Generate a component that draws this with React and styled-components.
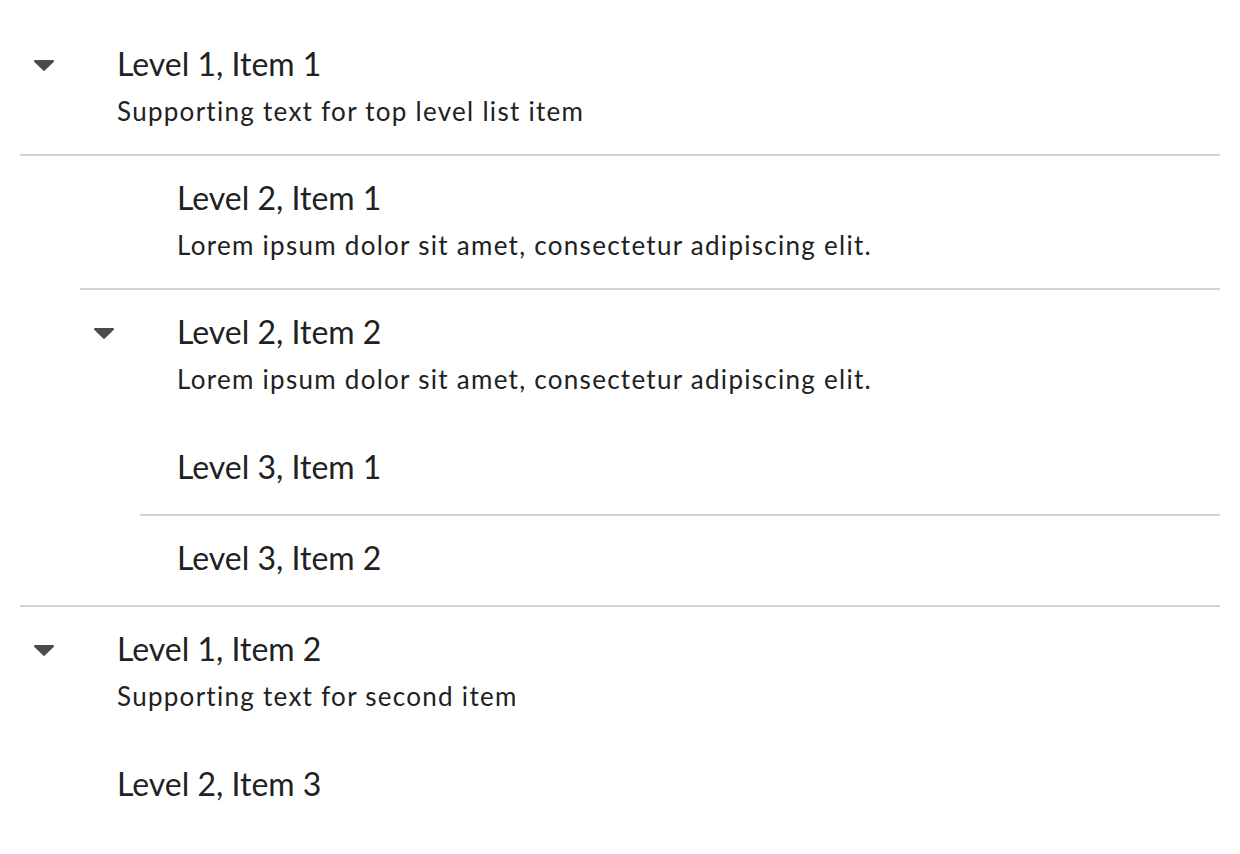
import React from "react";
import styled, { createGlobalStyle } from "styled-components";

const GlobalStyle = createGlobalStyle`
  html, body {
    margin: 0;
    padding: 0;
    background: #ffffff;
  }
  body {
    font-family: Lato, "Open Sans", sans-serif;
    color: #202122;
    font-variant-ligatures: none;
  }
`;

const tree = [
  {
    title: "Level 1, Item 1",
    text: "Supporting text for top level list item",
    rowRule: true,
    itemRule: true,
    children: {
      toggles: true,
      items: [
        {
          title: "Level 2, Item 1",
          text: "Lorem ipsum dolor sit amet, consectetur adipiscing elit.",
          rowRule: true,
        },
        {
          title: "Level 2, Item 2",
          text: "Lorem ipsum dolor sit amet, consectetur adipiscing elit.",
          children: {
            toggles: false,
            items: [
              { title: "Level 3, Item 1", rowRule: true },
              { title: "Level 3, Item 2" },
            ],
          },
        },
      ],
    },
  },
  {
    title: "Level 1, Item 2",
    text: "Supporting text for second item",
    children: {
      toggles: false,
      items: [{ title: "Level 2, Item 3" }],
    },
  },
];

const Caret = () => (
  <svg width="20" height="11" viewBox="0 0 20 11" aria-hidden="true">
    <path d="M1.2 0h17.6c1 0 1.5 1.2.8 1.9L10.8 10.6c-.45.45-1.15.45-1.6 0L.4 1.9C-.3 1.2.2 0 1.2 0z" fill="#494c4e" />
  </svg>
);

const ListItems = ({ list, nested, joined }) => (
  <List $nested={nested} $joined={joined}>
    {list.items.map((item) => (
      <Item key={item.title} $rule={item.itemRule}>
        <Row $rule={item.rowRule} $hasText={!!item.text}>
          <Control $wide={list.toggles}>{item.children && list.toggles && <Caret />}</Control>
          <Content>
            <Title>{item.title}</Title>
            {item.text && <Supporting>{item.text}</Supporting>}
          </Content>
        </Row>
        {item.children && <ListItems list={item.children} nested joined={!item.rowRule} />}
      </Item>
    ))}
  </List>
);

const App = () => (
  <>
    <GlobalStyle />
    <Page>
      <ListItems list={{ toggles: true, items: tree }} />
    </Page>
  </>
);

export default App;

const Page = styled.div`
  padding: 22px 20px 20px;
`;

const List = styled.ul`
  list-style: none;
  margin: ${(p) => (p.$joined ? "3px" : "0")} 0 0 ${(p) => (p.$nested ? "60px" : "0")};
  padding: 0;
`;

const Item = styled.li`
  border-bottom: ${(p) => (p.$rule ? "2px solid #cdd5dc" : "none")};
`;

const Row = styled.div`
  display: flex;
  align-items: flex-start;
  padding: 20px 0 ${(p) => (p.$hasText ? "24px" : "25px")};
  border-bottom: ${(p) => (p.$rule ? "2px solid #cdd5dc" : "none")};
`;

const Control = styled.div`
  flex: 0 0 ${(p) => (p.$wide ? "97px" : "37px")};
  height: 44px;
  display: flex;
  align-items: center;
  padding-left: 14px;
  box-sizing: border-box;
  padding-top: 2px;
`;

const Content = styled.div`
  display: flex;
  flex-direction: column;
  min-width: 0;
`;

const Title = styled.div`
  font-size: 32px;
  line-height: 44px;
  color: #202122;
`;

const Supporting = styled.div`
  margin-top: 6px;
  font-size: 26px;
  line-height: 38px;
  letter-spacing: 1.28px;
  color: #202122;
`;
